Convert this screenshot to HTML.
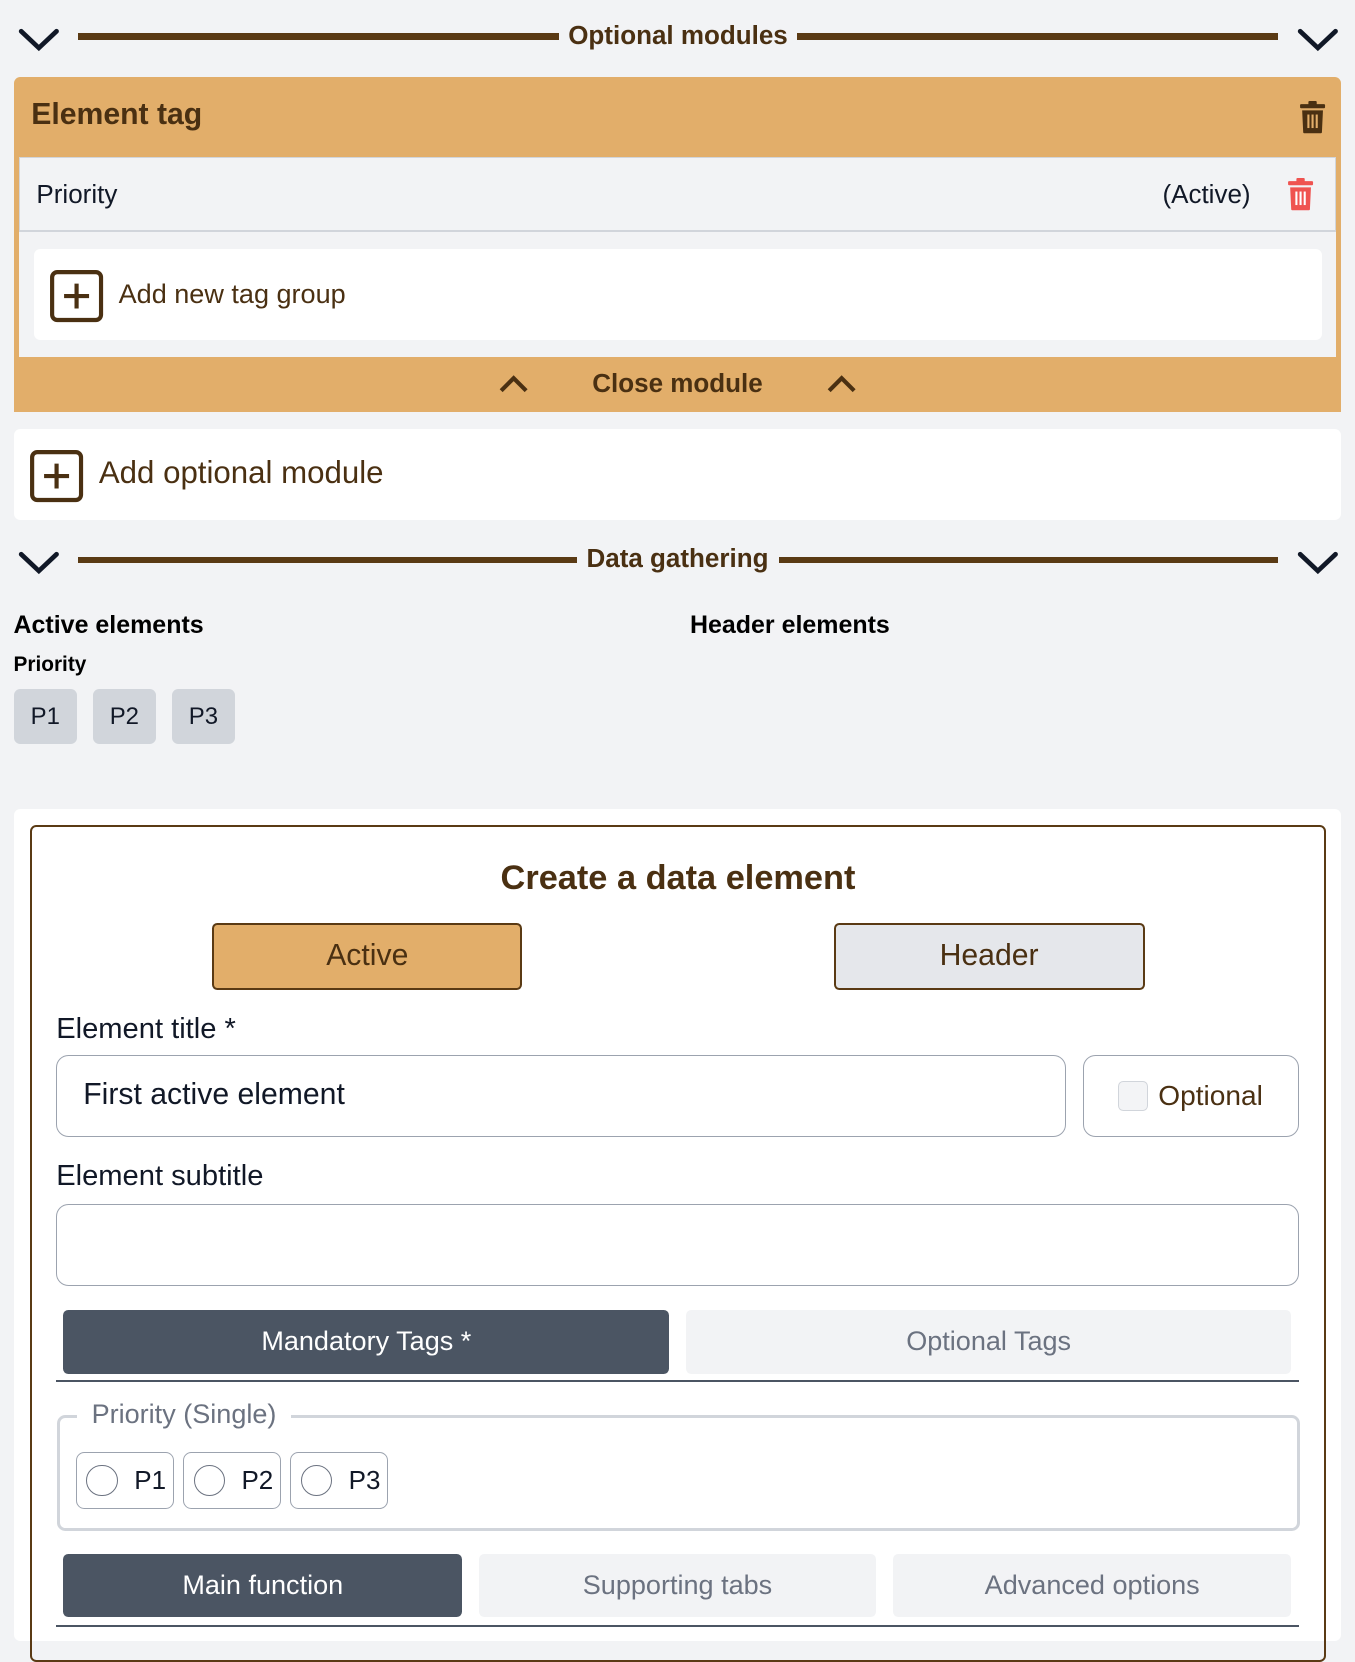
<!DOCTYPE html>
<html><head><meta charset="utf-8">
<style>
html,body{margin:0;padding:0;background:#f2f3f5;}
body{zoom:1.0407;width:1302px;height:1568px;overflow:hidden;position:relative;font-family:"Liberation Sans",sans-serif;}
.a{position:absolute;}
.br{color:#4a3012;}
.line{position:absolute;height:6px;background:#5a3a14;}
.center{display:flex;align-items:center;justify-content:center;}
.trash{position:absolute;}
</style></head><body>

<!-- Optional modules header -->
<svg class="a" style="left:16px;top:24px" width="44" height="28"><path d="M4 6 L21 22 L38 6" stroke="#111827" stroke-width="4.5" fill="none" stroke-linecap="round"/></svg>
<div class="line" style="left:75px;top:32px;width:462px"></div>
<div class="a br" style="left:537px;top:19px;width:229px;text-align:center;font-size:25px;font-weight:bold;">Optional modules</div>
<div class="line" style="left:766px;top:32px;width:462px"></div>
<svg class="a" style="left:1245px;top:24px" width="44" height="28"><path d="M4 6 L21 22 L38 6" stroke="#111827" stroke-width="4.5" fill="none" stroke-linecap="round"/></svg>

<!-- Orange module -->
<div class="a" style="left:13px;top:74px;width:1276px;height:322px;background:#e2ae6a;border-radius:6px 6px 0 0;"></div>
<div class="a br" style="left:30px;top:94px;font-size:29px;font-weight:bold;">Element tag</div>
<svg class="a" style="left:1247px;top:97px" width="28" height="32" viewBox="0 0 28 32"><rect x="2" y="3" width="24" height="4" rx="1" fill="#4a3012"/><rect x="10" y="0" width="8" height="4" rx="1" fill="#4a3012"/><path d="M4 9 H24 L23 30 Q23 31 22 31 H6 Q5 31 5 30 Z" fill="#4a3012"/><rect x="9" y="13" width="2" height="13" fill="#e2ae6a"/><rect x="13" y="13" width="2" height="13" fill="#e2ae6a"/><rect x="17" y="13" width="2" height="13" fill="#e2ae6a"/></svg>
<div class="a" style="left:18px;top:151px;width:1266px;height:192px;background:#f2f3f5;"></div>
<div class="a" style="left:18px;top:151px;width:1264px;height:69px;border:1px solid #d1d5db;border-bottom:2px solid #d1d5db;"></div>
<div class="a" style="left:35px;top:172px;font-size:25px;color:#111827;">Priority</div>
<div class="a" style="left:1117px;top:172px;font-size:25px;color:#111827;">(Active)</div>
<svg class="a" style="left:1236px;top:171px" width="28" height="32" viewBox="0 0 28 32"><rect x="2" y="3" width="24" height="4" rx="1" fill="#ef5350"/><rect x="10" y="0" width="8" height="4" rx="1" fill="#ef5350"/><path d="M4 9 H24 L23 30 Q23 31 22 31 H6 Q5 31 5 30 Z" fill="#ef5350"/><rect x="9" y="13" width="2" height="13" fill="#fff"/><rect x="13" y="13" width="2" height="13" fill="#fff"/><rect x="17" y="13" width="2" height="13" fill="#fff"/></svg>
<div class="a" style="left:33px;top:239px;width:1237px;height:88px;background:#fff;border-radius:6px;"></div>
<svg class="a" style="left:47px;top:258px" width="53" height="52"><rect x="3" y="3" width="47" height="46" rx="5" fill="none" stroke="#4a3012" stroke-width="4"/><path d="M26.5 14 V38 M14.5 26 H38.5" stroke="#4a3012" stroke-width="4"/></svg>
<div class="a br" style="left:114px;top:268px;font-size:26px;">Add new tag group</div>
<svg class="a" style="left:478px;top:358px" width="32" height="22"><path d="M4 17 L16 5 L28 17" stroke="#4a3012" stroke-width="4" fill="none"/></svg>
<div class="a br" style="left:540px;top:354px;width:222px;text-align:center;font-size:25px;font-weight:bold;">Close module</div>
<svg class="a" style="left:793px;top:358px" width="32" height="22"><path d="M4 17 L16 5 L28 17" stroke="#4a3012" stroke-width="4" fill="none"/></svg>

<!-- Add optional module -->
<div class="a" style="left:13px;top:412px;width:1276px;height:88px;background:#fff;border-radius:6px;"></div>
<svg class="a" style="left:28px;top:431px" width="53" height="52"><rect x="3" y="3" width="47" height="46" rx="5" fill="none" stroke="#4a3012" stroke-width="4"/><path d="M26.5 14 V38 M14.5 26 H38.5" stroke="#4a3012" stroke-width="4"/></svg>
<div class="a br" style="left:95px;top:437px;font-size:30px;">Add optional module</div>

<!-- Data gathering -->
<svg class="a" style="left:16px;top:527px" width="44" height="28"><path d="M4 6 L21 22 L38 6" stroke="#111827" stroke-width="4.5" fill="none" stroke-linecap="round"/></svg>
<div class="line" style="left:75px;top:535px;width:479px"></div>
<div class="a br" style="left:554px;top:522px;width:194px;text-align:center;font-size:25px;font-weight:bold;">Data gathering</div>
<div class="line" style="left:749px;top:535px;width:479px"></div>
<svg class="a" style="left:1245px;top:527px" width="44" height="28"><path d="M4 6 L21 22 L38 6" stroke="#111827" stroke-width="4.5" fill="none" stroke-linecap="round"/></svg>

<div class="a" style="left:13px;top:587px;font-size:24px;font-weight:bold;color:#000;">Active elements</div>
<div class="a" style="left:663px;top:587px;font-size:24px;font-weight:bold;color:#000;">Header elements</div>
<div class="a" style="left:13px;top:627px;font-size:20px;font-weight:bold;color:#000;">Priority</div>
<div class="a center" style="left:13px;top:662px;width:61px;height:53px;background:#d1d5db;border-radius:6px;font-size:23px;color:#111827;">P1</div>
<div class="a center" style="left:89px;top:662px;width:61px;height:53px;background:#d1d5db;border-radius:6px;font-size:23px;color:#111827;">P2</div>
<div class="a center" style="left:165px;top:662px;width:61px;height:53px;background:#d1d5db;border-radius:6px;font-size:23px;color:#111827;">P3</div>

<!-- Create panel -->
<div class="a" style="left:13px;top:777px;width:1276px;height:800px;background:#fff;border-radius:6px;"></div>
<div class="a" style="left:29px;top:793px;width:1241px;height:800px;border:2px solid #5a3a14;border-radius:6px;"></div>
<div class="a br" style="left:29px;top:825px;width:1245px;text-align:center;font-size:33px;font-weight:bold;">Create a data element</div>
<div class="a center br" style="left:204px;top:887px;width:294px;height:60px;background:#e2ae6a;border:2px solid #5a3a14;border-radius:5px;font-size:29px;">Active</div>
<div class="a center br" style="left:801px;top:887px;width:295px;height:60px;background:#e5e7eb;border:2px solid #5a3a14;border-radius:5px;font-size:29px;">Header</div>

<div class="a" style="left:54px;top:973px;font-size:28px;color:#111827;">Element title *</div>
<div class="a" style="left:54px;top:1014px;width:968px;height:77px;border:1.5px solid #9ca3af;border-radius:12px;"></div>
<div class="a" style="left:80px;top:1036px;font-size:29px;color:#111827;">First active element</div>
<div class="a" style="left:1041px;top:1014px;width:205px;height:77px;border:1.5px solid #9ca3af;border-radius:12px;"></div>
<div class="a" style="left:1074px;top:1039px;width:27px;height:27px;border:1.5px solid #d1d5db;border-radius:5px;background:#f3f4f6;"></div>
<div class="a br" style="left:1113px;top:1038px;font-size:27px;">Optional</div>

<div class="a" style="left:54px;top:1115px;font-size:28px;color:#111827;">Element subtitle</div>
<div class="a" style="left:54px;top:1157px;width:1192px;height:77px;border:1.5px solid #9ca3af;border-radius:12px;"></div>

<div class="a center" style="left:61px;top:1259px;width:582px;height:61px;background:#4b5563;border-radius:5px;color:#fff;font-size:26px;">Mandatory Tags *</div>
<div class="a center" style="left:659px;top:1259px;width:582px;height:61px;background:#f2f3f5;border-radius:5px;color:#6b7280;font-size:26px;">Optional Tags</div>
<div class="a" style="left:54px;top:1326px;width:1194px;height:2px;background:#4b5563;"></div>

<div class="a" style="left:55px;top:1360px;width:1188px;height:105px;border:3px solid #d1d5db;border-radius:8px;"></div>
<div class="a" style="left:74px;top:1344px;padding:0 14px;background:#fff;font-size:26px;color:#6b7280;">Priority (Single)</div>
<div class="a" style="left:73px;top:1395px;width:92px;height:53px;border:1.5px solid #9ca3af;border-radius:8px;"></div>
<div class="a" style="left:83px;top:1408px;width:28px;height:28px;border:1.5px solid #6b7280;border-radius:50%;"></div>
<div class="a" style="left:129px;top:1408px;font-size:25px;color:#111827;">P1</div>
<div class="a" style="left:176px;top:1395px;width:92px;height:53px;border:1.5px solid #9ca3af;border-radius:8px;"></div>
<div class="a" style="left:186px;top:1408px;width:28px;height:28px;border:1.5px solid #6b7280;border-radius:50%;"></div>
<div class="a" style="left:232px;top:1408px;font-size:25px;color:#111827;">P2</div>
<div class="a" style="left:279px;top:1395px;width:92px;height:53px;border:1.5px solid #9ca3af;border-radius:8px;"></div>
<div class="a" style="left:289px;top:1408px;width:28px;height:28px;border:1.5px solid #6b7280;border-radius:50%;"></div>
<div class="a" style="left:335px;top:1408px;font-size:25px;color:#111827;">P3</div>

<div class="a center" style="left:61px;top:1493px;width:383px;height:61px;background:#4b5563;border-radius:5px;color:#fff;font-size:26px;">Main function</div>
<div class="a center" style="left:460px;top:1493px;width:382px;height:61px;background:#f2f3f5;border-radius:5px;color:#6b7280;font-size:26px;">Supporting tabs</div>
<div class="a center" style="left:858px;top:1493px;width:383px;height:61px;background:#f2f3f5;border-radius:5px;color:#6b7280;font-size:26px;">Advanced options</div>
<div class="a" style="left:54px;top:1561px;width:1194px;height:2px;background:#4b5563;"></div>

</body></html>
